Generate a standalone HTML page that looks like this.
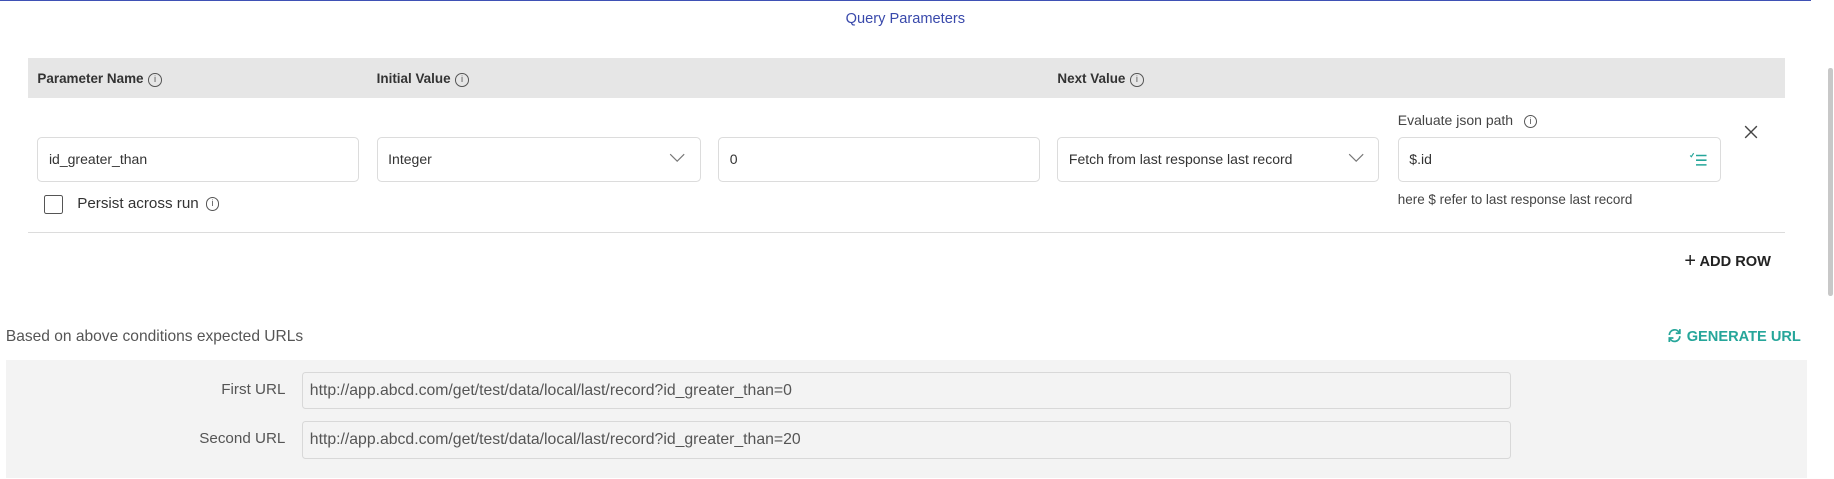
<!DOCTYPE html>
<html><head><meta charset="utf-8"><style>
html,body{margin:0;padding:0;background:#fff;overflow:hidden}
body{width:1568px;height:409px;zoom:1.1697;position:relative;font-family:"Liberation Sans",sans-serif;color:#333}
.a{position:absolute}
.hdr{left:24px;top:50px;width:1502px;height:34px;background:#e6e6e6}
.hl{font-size:11.5px;font-weight:bold;color:#333;top:61px}
.inp{border:1px solid #dcdcdc;border-radius:4px;height:39px;box-sizing:border-box;background:#fff;font-size:12px;color:#333;line-height:37px;padding-left:9px}
.info{display:inline-block;width:10px;height:10px;border:1px solid #555;border-radius:50%;font-size:8px;line-height:10px;text-align:center;vertical-align:middle;margin-left:4px;color:#555;font-weight:normal}
.chev{position:absolute;right:12px;top:13px}
.url{border:1px solid #d8d8d8;border-radius:3px;background:#f3f3f3;height:32px;box-sizing:border-box;line-height:30px;font-size:13.5px;color:#555;padding-left:6px}
.lbl{font-size:13px;color:#555;text-align:right;width:200px}
</style></head><body>
<div class="a" style="left:0;top:0;width:1548px;height:1px;background:#3f51b5"></div>
<div class="a" style="left:0;width:1548px;top:9px;text-align:center;font-size:12.5px;color:#3949ab">Query Parameters</div>
<div class="a hdr"></div>
<div class="a hl" style="left:32px">Parameter Name<span class="info">i</span></div>
<div class="a hl" style="left:322px">Initial Value<span class="info">i</span></div>
<div class="a hl" style="left:904px">Next Value<span class="info">i</span></div>

<div class="a inp" style="left:32px;top:117px;width:275px">id_greater_than</div>
<div class="a inp" style="left:322px;top:117px;width:277px">Integer<svg class="chev" width="14" height="8" viewBox="0 0 14 8"><path d="M1 1L7 7L13 1" fill="none" stroke="#777" stroke-width="1"/></svg></div>
<div class="a inp" style="left:614px;top:117px;width:275px">0</div>
<div class="a inp" style="left:904px;top:117px;width:275px">Fetch from last response last record<svg class="chev" width="14" height="8" viewBox="0 0 14 8"><path d="M1 1L7 7L13 1" fill="none" stroke="#777" stroke-width="1"/></svg></div>
<div class="a" style="left:1195px;top:96px;font-size:12px;color:#444">Evaluate json path<span class="info" style="margin-left:9px">i</span></div>
<div class="a inp" style="left:1195px;top:117px;width:276px">$.id<svg class="a" style="right:10px;top:12px" width="16" height="14" viewBox="0 0 16 14"><path d="M1 3L2 4L4 1" fill="none" stroke="#26a69a" stroke-width="1"/><path d="M6 3H15M6 7H15M6 11H15" stroke="#26a69a" stroke-width="1.3"/></svg></div>
<div class="a" style="left:1195px;top:164px;font-size:11.5px;color:#444">here $ refer to last response last record</div>
<svg class="a" style="left:1491px;top:107px" width="12" height="12" viewBox="0 0 12 12"><path d="M1 1L11 11M11 1L1 11" stroke="#444" stroke-width="1.2"/></svg>

<div class="a" style="left:38px;top:167px;width:16px;height:16px;border:1.5px solid #555;border-radius:2px;box-sizing:border-box"></div>
<div class="a" style="left:66px;top:167px;font-size:13px;color:#333">Persist across run<span class="info" style="margin-left:6px">i</span></div>
<div class="a" style="left:24px;top:198px;width:1502px;height:1px;background:#dcdcdc"></div>
<div class="a" style="left:1440px;top:214px;font-size:12.5px;font-weight:bold;color:#222"><span style="font-weight:normal;font-size:17px;vertical-align:-1px">+</span> ADD ROW</div>

<div class="a" style="left:5px;top:280px;font-size:13.3px;color:#555">Based on above conditions expected URLs</div>
<div class="a" style="left:1425px;top:280px;font-size:12.5px;font-weight:bold;color:#26a69a"><svg width="13" height="13" viewBox="0 0 13 13" style="vertical-align:-2px;margin-right:4px"><path d="M2 6A4.5 4.5 0 0 1 10.5 4M11 7A4.5 4.5 0 0 1 2.5 9" fill="none" stroke="#26a69a" stroke-width="1.5"/><path d="M11 1V4.5H7.5M2 12V8.5H5.5" fill="none" stroke="#26a69a" stroke-width="1.5"/></svg>GENERATE URL</div>
<div class="a" style="left:5px;top:308px;width:1540px;height:101px;background:#f3f3f3"></div>
<div class="a lbl" style="left:44px;top:326px">First URL</div>
<div class="a url" style="left:258px;top:318px;width:1034px">http://app.abcd.com/get/test/data/local/last/record?id_greater_than=0</div>
<div class="a lbl" style="left:44px;top:368px">Second URL</div>
<div class="a url" style="left:258px;top:360px;width:1034px">http://app.abcd.com/get/test/data/local/last/record?id_greater_than=20</div>
<div class="a" style="left:1563px;top:58px;width:4px;height:195px;background:#c8c8c8;border-radius:2px"></div>
</body></html>
